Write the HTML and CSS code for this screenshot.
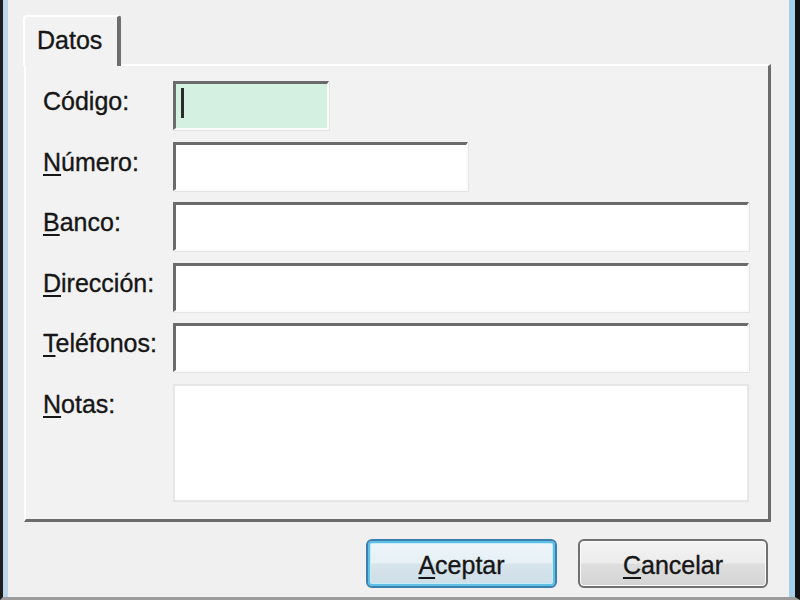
FILE: index.html
```html
<!DOCTYPE html>
<html lang="es">
<head>
<meta charset="utf-8">
<title>Datos</title>
<link rel="stylesheet" href="styles.css">
</head>
<body>
<div class="window">
  <div class="frame">
    <div class="tabstrip">
      <div class="tab">Datos</div>
    </div>
    <div class="panel">
      <div class="form">
        <div class="label">Código:</div>
        <div class="field field-code"><span class="caret"></span></div>

        <div class="label"><u>N</u>úmero:</div>
        <div class="field field-num"></div>

        <div class="label"><u>B</u>anco:</div>
        <div class="field"></div>

        <div class="label"><u>D</u>irección:</div>
        <div class="field"></div>

        <div class="label"><u>T</u>eléfonos:</div>
        <div class="field"></div>

        <div class="label"><u>N</u>otas:</div>
        <div class="notes"></div>
      </div>
    </div>
    <div class="buttons">
      <div class="btn btn-default"><u>A</u>ceptar</div>
      <div class="btn"><u>C</u>ancelar</div>
    </div>
  </div>
</div>
</body>
</html>
```

FILE: styles.css
```css
html, body {
  margin: 0;
  padding: 0;
}

body {
  width: 800px;
  height: 600px;
  overflow: hidden;
  background: #f0f0f0;
  font-family: "Liberation Sans", Arial, sans-serif;
  font-size: 25px;
  color: #161616;
  -webkit-text-stroke: 0.35px #161616;
}

.window {
  box-sizing: border-box;
  width: 800px;
  height: 600px;
  border-left: 3px solid #1e1e1e;
  border-right: 5px solid #121212;
  border-bottom: 3px solid #9c9c9c;
}

.frame {
  box-sizing: border-box;
  height: 100%;
  border-left: 5px solid #bdd6ea;
  border-right: 6px solid #a6d0ea;
  background: #f0f0f0;
}

.tabstrip {
  padding-top: 15px;
  padding-left: 15px;
  display: flex;
}

.tab {
  position: relative;
  z-index: 1;
  box-sizing: border-box;
  width: 98px;
  height: 51px;
  margin-bottom: -2px;
  border-top: 2px solid #ffffff;
  border-left: 2px solid #ffffff;
  border-right: 4px solid #6e6e6e;
  border-top-left-radius: 4px;
  border-top-right-radius: 3px;
  background: #f2f2f2;
  padding-left: 12px;
  padding-top: 9px;
  line-height: 28px;
}

.panel {
  box-sizing: border-box;
  width: 747px;
  height: 458px;
  margin-left: 16px;
  border-top: 2px solid #ffffff;
  border-left: 2px solid #ffffff;
  border-right: 3px solid #6c6c6c;
  border-bottom: 3px solid #6c6c6c;
  background: #f2f2f2;
  padding: 15px 19px 0 17px;
}

.form {
  display: grid;
  grid-template-columns: 130px 1fr;
  row-gap: 11.6px;
  align-items: start;
}

.label {
  line-height: 28px;
  padding-top: 6px;
  white-space: nowrap;
}

u {
  text-decoration-thickness: 2px;
  text-underline-offset: 3px;
}

.field {
  box-sizing: border-box;
  height: 49px;
  background: #ffffff;
  border-top: 3px solid #6b6b6b;
  border-left: 3px solid #6b6b6b;
  border-right: 2px solid #fbfbfb;
  border-bottom: 2px solid #fbfbfb;
  box-shadow: 1px 1px 0 #e4e4e4;
}

.field-code {
  width: 156px;
  background: #d3f0e1;
}

.field-num {
  width: 295px;
}

.caret {
  display: block;
  width: 3px;
  height: 30px;
  margin: 4px 0 0 5px;
  background: #2a2a2a;
}

.notes {
  box-sizing: border-box;
  height: 118px;
  background: #ffffff;
  border: 2px solid #e6e6e6;
}

.buttons {
  display: flex;
  justify-content: flex-end;
  gap: 21px;
  margin-top: 17px;
  padding-right: 21px;
}

.btn {
  box-sizing: border-box;
  width: 190px;
  height: 49px;
  border: 2px solid #707070;
  border-radius: 6px;
  box-shadow: inset 0 0 0 1px #fbfbfb;
  background: linear-gradient(#f3f3f3 0%, #ececec 48%, #dedede 52%, #d4d4d4 100%);
  display: flex;
  align-items: center;
  justify-content: center;
  line-height: 28px;
  padding-top: 2px;
}

.btn-default {
  width: 191px;
  border: 2px solid #3d7fae;
  box-shadow: inset 0 0 0 2px #5fc0e6, inset 0 0 0 3px #c6ecf8;
  background: linear-gradient(#eef6fa 0%, #e6f0f5 48%, #d6e4ec 52%, #cddde6 100%);
}
```
